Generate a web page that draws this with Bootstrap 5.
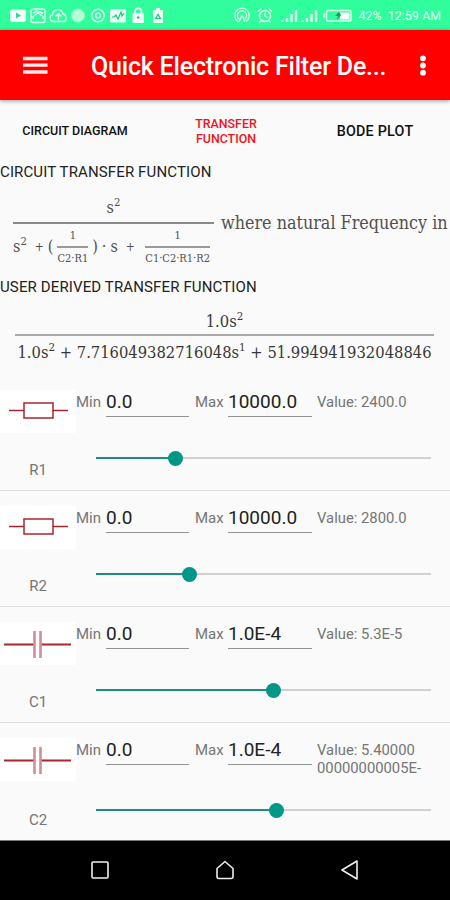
<!DOCTYPE html>
<html lang="en">
<head>
<meta charset="utf-8">
<meta name="viewport" content="width=device-width, initial-scale=1">
<title>Quick Electronic Filter Design</title>
<link href="https://cdn.jsdelivr.net/npm/bootstrap@5.3.0/dist/css/bootstrap.min.css" rel="stylesheet">
<style>
body{font-family:Roboto,"Liberation Sans",sans-serif;background:#fafafa;color:#222;line-height:1;width:450px;height:900px;overflow:hidden}
.status{height:30px;background:#30fd9c;color:#e6fff2;font-size:12.5px;padding:2px 9px 0 9px}
.status svg{display:block;flex:none}
.battery-text{margin:0 6px 0 6px}
.appbar{height:70px;background:#f00;padding:2px 23px 0 23px;box-shadow:0 1px 4px rgba(0,0,0,.4);position:relative;z-index:1}
.apptitle{font-size:25px;font-weight:500;color:#fff;margin-left:43px;width:310px;letter-spacing:-.2px;padding-top:1px}
.tabs{height:62px;font-weight:500;color:#111}
.tabs>div{width:150px;text-align:center}
.t1{font-size:12.5px}.tabs .t2{font-size:12.4px;line-height:15px;color:#f0121c;padding-left:2px}.t3{font-size:14.3px;letter-spacing:.25px}
.heading{font-size:15px;height:20px;line-height:20px;white-space:nowrap;letter-spacing:.13px}
.math{font-family:"DejaVu Serif Condensed","DejaVu Serif","Liberation Serif",serif;font-stretch:condensed;color:#505050;white-space:nowrap}
.math .sq{font-size:.7em;vertical-align:.6em;line-height:0}
.formula1{height:95px;font-size:16px;padding-left:13px}
.f1{width:201px}
.rule{height:1.5px;background:#8a8a8a}
.f1top{height:32px;text-align:center;line-height:36px}
.f1bot{height:47px}
.plus{font-size:12px}
.tiny{font-size:11px}
.tiny .rule{background:#999}
.tiny .n,.tiny .d{height:21px;line-height:22px;text-align:center}
.where{font-size:17.8px;margin:22px 0 0 7px;line-height:22px}
.formula2{height:78px;padding:1px 16px 0 15px;font-size:16.4px;color:#383838}
.formula2 .rule{background:#aaa;height:2px;margin-top:4px}
.f2bot{padding-top:9px}
.part{height:116px;border-bottom:1px solid #dedede;color:#757575}
.part:last-child{height:117px;border:0}
.sym{width:76px;height:43px;margin-top:15px;background:#fff}
.symname{font-size:15px;margin:28px 0 0 0;text-align:center;line-height:18px}
.part:last-child .symname{margin-top:30px}
.fields{height:57px;padding-top:17px;font-size:15px}
.fl{line-height:21px}
.minl{width:30px}
.maxl{width:33px;margin-left:6px}
.val{width:83px;height:25px;border-bottom:1.5px solid #929292;font-size:19px;color:#222;line-height:20px}
.val.wide{width:84px}
.reading{line-height:18px;padding-top:1px;margin-left:5px;white-space:nowrap;font-size:14.8px}
.slider{height:16px;width:335px;margin:18px 0 0 19.5px}
.part:last-child .slider{margin-top:22px}
.done{height:2.4px;background:#1e8f7e}
.rest{height:2px;background:#d0d0d0}
.thumb{width:15px;height:15px;border-radius:50%;background:#009688;margin:0 -7.5px;flex:none;z-index:1}
.sysnav{height:60px;background:#000;border-top:1px solid #777;gap:105px;padding-bottom:2px}
</style>
<script src="https://cdn.jsdelivr.net/npm/bootstrap@5.3.0/dist/js/bootstrap.bundle.min.js"></script>
</head>
<body class="d-flex flex-column">
<header class="status d-flex align-items-center justify-content-between flex-shrink-0">
  <svg width="157" height="18" viewBox="9 7 157 18" fill="none" stroke="#e6fff2" stroke-width="1.4">
    <rect x="10" y="9.500" width="16" height="12.500" rx="3" fill="#f4fff9" stroke="none"/><path d="M16 12.500v6l5-3z" fill="#30d98c" stroke="none"/>
    <rect x="31" y="9" width="14" height="13.500" rx="2"/><path d="M33 19v-2.500l5-3.500 5 3.500V19M33 13l3-1.500h3l4 2"/>
    <path d="M54 21.500c-5 0-5-6-1.500-6.500C53 8 62 8 63 14c4 .5 4 7.500 0 7.500zM58.500 20v-6M55.500 16.500l3-3 3 3"/>
    <circle cx="78" cy="15.500" r="6.500" fill="#b4ffd9" stroke="#92fccb" stroke-width="1"/>
    <circle cx="98" cy="15.500" r="6.200"/><circle cx="98" cy="15.500" r="2.400"/>
    <rect x="110" y="9" width="16" height="13.500" rx="1.500" fill="#e6fff2" stroke="none"/><path d="M112 17h2l2-2 2 4 3-7 1 4 2-3" stroke="#20c77c" stroke-width="1.200"/>
    <rect x="132.500" y="13" width="11.500" height="10" rx="1" fill="#f4fff9" stroke="none"/><path d="M135 13v-1.500a3.200 3.200 0 0 1 6.400 0V13" stroke-width="1.800"/><circle cx="138.200" cy="17.500" r="1.300" fill="#20c77c" stroke="none"/>
    <path d="M153 10h3V8h4v2h3v13h-10z" fill="#e6fff2" stroke="none"/><path d="M155.500 18.500l2.500-4 2.500 4z" stroke="#20c77c" stroke-width="1.200"/>
  </svg>
  <div class="d-flex align-items-center">
    <svg width="120" height="18" viewBox="235 7 120 18" fill="none" stroke="#dcffef" stroke-width="1.300">
      <path d="M241 21.500a7.300 7.300 0 1 1 8 0M242 19a4.600 4.600 0 1 1 6 0M245 15l-3 7M245 15l3 7"/>
      <circle cx="268" cy="16" r="5.500" stroke-width="1.600"/><path d="M268 12.500V16l2.500 1.500M261 11.500l3.500-3M275 11.500l-3.500-3M264 20.500l-1.500 2M272 20.500l1.500 2"/>
      <path d="M285.500 22v-1.500M290 22v-4M294.500 22v-8M299 22V10M305.500 22v-1.500M310 22v-4M314.500 22v-8M319 22V10" stroke-width="2.400"/>
      <rect x="329.500" y="10.500" width="24.500" height="10.500" rx="1.500" stroke-width="1.500"/><path d="M327 13.500v4" stroke-width="2"/><path d="M343 12.500h9.500v7H343z" fill="#f4fff9" stroke="none"/><path d="M342 12l-4 4h3l-1 4 4-5z" fill="#149c5e" stroke="none"/>
    </svg>
    <span class="battery-text">42%</span><span class="text-nowrap">12:59 AM</span>
  </div>
</header>

<nav class="appbar d-flex align-items-center flex-shrink-0">
  <svg width="25" height="20" viewBox="0 0 25 20" class="flex-shrink-0"><path d="M0 2.500h24.500M0 9.200h24.500M0 16h24.500" stroke="#ffe9e9" stroke-width="3.300"/></svg>
  <div class="apptitle text-nowrap">Quick Electronic Filter De...</div>
  <svg width="8" height="24" viewBox="0 0 8 24" class="ms-auto" fill="#fff"><circle cx="4" cy="4.300" r="2.900"/><circle cx="4" cy="11.500" r="2.900"/><circle cx="4" cy="18.700" r="2.900"/></svg>
</nav>

<main class="flex-grow-1">
  <div class="tabs d-flex align-items-center">
    <div class="t1">CIRCUIT DIAGRAM</div><div class="t2">TRANSFER<br>FUNCTION</div><div class="t3">BODE PLOT</div>
  </div>
  <div class="heading">CIRCUIT TRANSFER FUNCTION</div>
  <div class="formula1 math d-flex pt-2">
    <div class="f1 flex-shrink-0">
      <div class="f1top">s<span class="sq">2</span></div>
      <div class="rule"></div>
      <div class="f1bot d-flex align-items-center">
        <span>s<span class="sq">2</span></span><span class="plus ms-2">+</span><span class="ms-1">(</span>
        <div class="tiny flex-shrink-0 ms-1"><div class="n">1</div><div class="rule"></div><div class="d">C2·R1</div></div>
        <span class="ps-1">)</span><span class="ms-1">·</span><span class="ms-1">s</span><span class="plus ms-1 ps-1">+</span>
        <div class="tiny ms-auto flex-shrink-0 me-1"><div class="n">1</div><div class="rule"></div><div class="d">C1·C2·R1·R2</div></div>
      </div>
    </div>
    <div class="where">where natural Frequency in</div>
  </div>
  <div class="heading">USER DERIVED TRANSFER FUNCTION</div>
  <div class="formula2 math">
    <div class="text-center pt-3">1.0s<span class="sq">2</span></div>
    <div class="rule"></div>
    <div class="text-center f2bot">1.0s<span class="sq">2</span> + 7.716049382716048s<span class="sq">1</span> + 51.994941932048846</div>
  </div>

  <section>
    <div class="part d-flex">
      <div><div class="sym"><svg width="76" height="43" viewBox="0 0 76 43" fill="none" stroke="#a8262c" stroke-width="1.500"><path d="M9 20.500h15M53 20.500h15"/><rect x="24" y="13" width="29" height="15"/></svg></div><div class="symname">R1</div></div>
      <div><div class="fields d-flex"><span class="fl minl">Min</span><div class="val">0.0</div><span class="fl maxl">Max</span><div class="val wide">10000.0</div><div class="reading">Value: 2400.0</div></div>
      <div class="slider d-flex align-items-center"><div class="done" style="width:24%"></div><div class="thumb"></div><div class="rest flex-grow-1"></div></div></div>
    </div>
    <div class="part d-flex">
      <div><div class="sym"><svg width="76" height="43" viewBox="0 0 76 43" fill="none" stroke="#a8262c" stroke-width="1.500"><path d="M9 20.500h15M53 20.500h15"/><rect x="24" y="13" width="29" height="15"/></svg></div><div class="symname">R2</div></div>
      <div><div class="fields d-flex"><span class="fl minl">Min</span><div class="val">0.0</div><span class="fl maxl">Max</span><div class="val wide">10000.0</div><div class="reading">Value: 2800.0</div></div>
      <div class="slider d-flex align-items-center"><div class="done" style="width:28%"></div><div class="thumb"></div><div class="rest flex-grow-1"></div></div></div>
    </div>
    <div class="part d-flex">
      <div><div class="sym"><svg width="76" height="43" viewBox="0 0 76 43" fill="none"><path d="M4 22.500h30M41 22.500h30" stroke="#a8262c" stroke-width="1.800"/><path d="M34.500 9v27M40.500 9v27" stroke="#cf8f95" stroke-width="2.600"/></svg></div><div class="symname">C1</div></div>
      <div><div class="fields d-flex"><span class="fl minl">Min</span><div class="val">0.0</div><span class="fl maxl">Max</span><div class="val wide">1.0E-4</div><div class="reading">Value: 5.3E-5</div></div>
      <div class="slider d-flex align-items-center"><div class="done" style="width:53%"></div><div class="thumb"></div><div class="rest flex-grow-1"></div></div></div>
    </div>
    <div class="part d-flex">
      <div><div class="sym"><svg width="76" height="43" viewBox="0 0 76 43" fill="none"><path d="M4 22.500h30M41 22.500h30" stroke="#a8262c" stroke-width="1.800"/><path d="M34.500 9v27M40.500 9v27" stroke="#cf8f95" stroke-width="2.600"/></svg></div><div class="symname">C2</div></div>
      <div><div class="fields d-flex"><span class="fl minl">Min</span><div class="val">0.0</div><span class="fl maxl">Max</span><div class="val wide">1.0E-4</div><div class="reading">Value: 5.40000<br>00000000005E-</div></div>
      <div class="slider d-flex align-items-center"><div class="done" style="width:54%"></div><div class="thumb"></div><div class="rest flex-grow-1"></div></div></div>
    </div>
  </section>
</main>

<footer class="sysnav flex-shrink-0 d-flex justify-content-center align-items-center">
  <svg width="20" height="20" viewBox="0 0 20 20" fill="none" stroke="#eee" stroke-width="1.600"><rect x="2" y="2" width="16" height="16" rx="1"/></svg>
  <svg width="20" height="20" viewBox="0 0 20 20" fill="none" stroke="#eee" stroke-width="1.600" stroke-linejoin="round"><path d="M2 8.500l8-7 8 7v8q0 2-2 2H4q-2 0-2-2z"/></svg>
  <svg width="20" height="20" viewBox="0 0 20 20" fill="none" stroke="#eee" stroke-width="1.600" stroke-linejoin="round"><path d="M17 1v18L2 10z"/></svg>
</footer>
</body>
</html>
